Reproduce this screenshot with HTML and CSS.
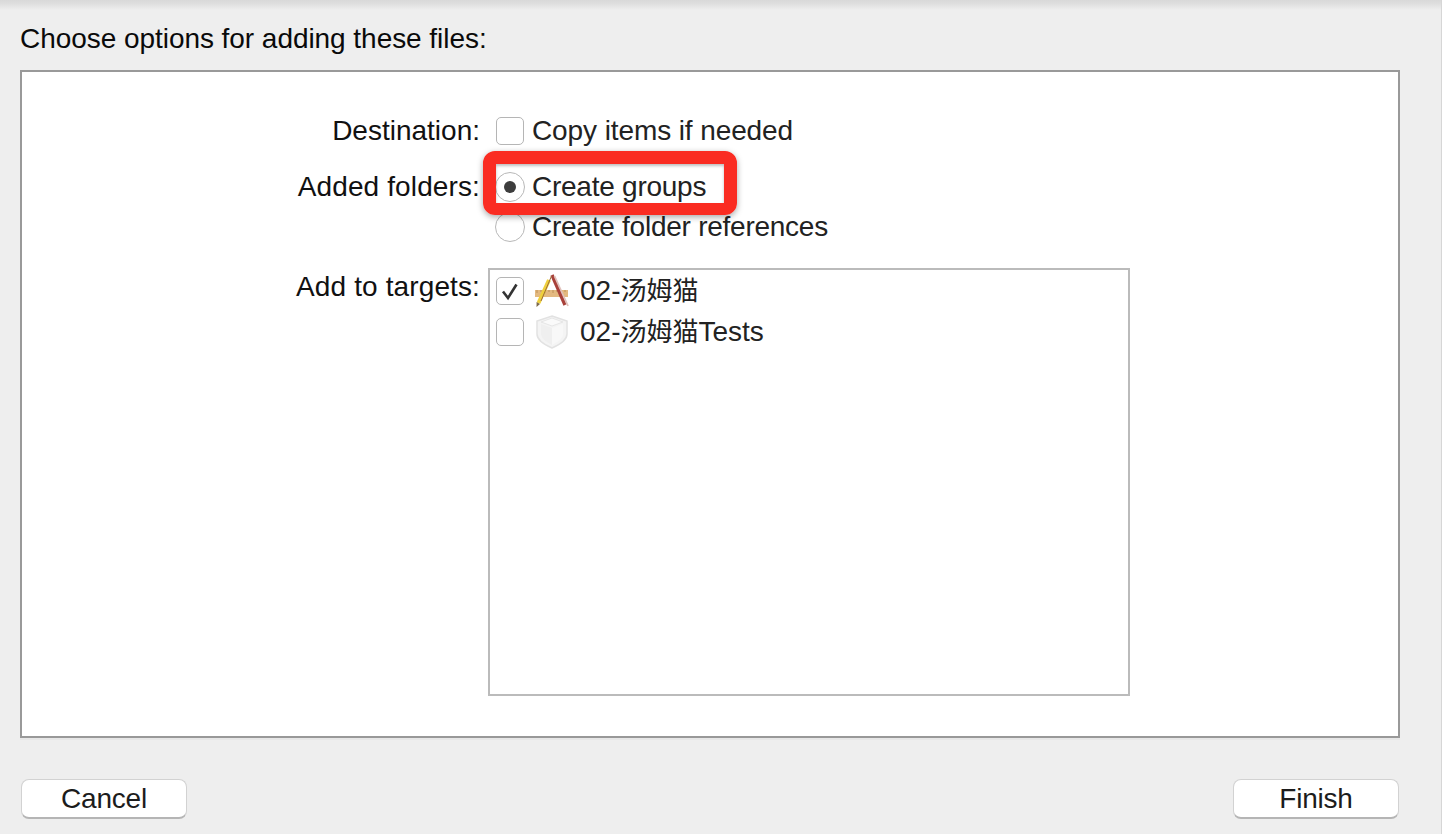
FILE: index.html
```html
<!DOCTYPE html>
<html lang="en">
<head>
<meta charset="utf-8">
<title>Choose options for adding these files</title>
<link rel="stylesheet" href="styles.css">
</head>
<body>
<div class="page">
  <div class="top-shade"></div>
  <div class="content">
    <h1 class="title">Choose options for adding these files:</h1>
    <section class="panel">
      <div class="row row-first">
        <div class="label">Destination:</div>
        <div class="option"><span class="check"></span><span>Copy items if needed</span></div>
      </div>
      <div class="row">
        <div class="label label-wide">Added folders:</div>
        <div class="option option-tight"><span class="radio radio-on"></span><span>Create groups</span></div>
      </div>
      <div class="row">
        <div class="label"></div>
        <div class="option option-tight"><span class="radio"></span><span>Create folder references</span></div>
      </div>
      <div class="row row-targets">
        <div class="label label-wide">Add to targets:</div>
        <div class="list">
          <div class="target">
            <span class="check">
              <svg class="tick" viewBox="0 0 28 28" width="28" height="28"><path d="M7 14.5 L12 21 L20.5 7.5" fill="none" stroke="#333" stroke-width="2.6"/></svg>
            </span>
            <svg class="icon" viewBox="0 0 36 36" width="36" height="36">
              <rect x="1" y="17" width="33" height="7" fill="#e3b980"/>
              <path d="M3 17v3M7 17v2M11 17v3M15 17v2M19 17v3M23 17v2M27 17v3M31 17v2" stroke="#bd9058" stroke-width="1"/>
              <path d="M18 2 L31 32" stroke="#a8403a" stroke-width="3.4"/>
              <path d="M20.5 3 L34 33" stroke="#e0c0ba" stroke-width="1.8"/>
              <path d="M15 7 L4.5 30" stroke="#efd03c" stroke-width="4"/>
              <path d="M17.5 3 L7 28" stroke="#9c6b3a" stroke-width="1"/>
              <path d="M2.6 29 L6 31 L2.5 34 Z" fill="#7d6a4a"/>
            </svg>
            <span class="target-name">02-<span class="cjk">汤姆猫</span></span>
          </div>
          <div class="target">
            <span class="check"></span>
            <svg class="icon" viewBox="0 0 36 36" width="36" height="36">
              <path d="M18 2 L33 7 V20 C33 26 25 31 18 34 C11 31 3 26 3 20 V7 Z" fill="#f4f4f4" stroke="#e2e2e2" stroke-width="1.5"/>
              <path d="M18 4 L29 8 L18 12 L7 8 Z" fill="#fafafa" stroke="#e6e6e6" stroke-width="1"/>
              <path d="M7 10 V20 C7 24 12 28 18 31 V14 Z" fill="#efefef"/>
              <path d="M29 10 V20 C29 24 24 28 18 31 V14 Z" fill="#f8f8f8"/>
            </svg>
            <span class="target-name">02-<span class="cjk">汤姆猫</span>Tests</span>
          </div>
        </div>
      </div>
      <div class="callout"></div>
    </section>
    <div class="panel-edge"></div>
    <footer class="footer">
      <button class="btn" type="button">Cancel</button>
      <button class="btn" type="button">Finish</button>
    </footer>
  </div>
</div>
</body>
</html>
```
FILE: styles.css
```css
* { box-sizing: border-box; }
html, body { margin: 0; padding: 0; }
body {
  background: #eeeeee;
  font-family: "Liberation Sans", "Noto Sans CJK SC", sans-serif;
  color: #1c1c1c;
  overflow: hidden;
}
.page {
  width: 1442px;
  height: 834px;
  border-right: 1px solid #d6d6d6;
  display: flex;
  flex-direction: column;
}
.top-shade {
  height: 10px;
  flex: none;
  background: linear-gradient(#d9d9d9 0, #dedede 35%, #eeeeee 100%);
}
.content {
  padding: 9px 0 0 20px;
  width: 1400px;
}
.title {
  margin: 0 0 11px;
  font-size: 28px;
  font-weight: 400;
  line-height: 40px;
  color: #0a0a0a;
  letter-spacing: -.05px;
}
.panel {
  position: relative;
  width: 1380px;
  height: 668px;
  background: #fff;
  border: 2px solid #999;
  padding-top: 39px;
}
.panel-edge {
  height: 2px;
  background: #e7e7e7;
}
.row {
  display: flex;
  height: 40px;
  font-size: 28px;
  line-height: 40px;
}
.row-first { margin-bottom: 16px; }
.label {
  width: 458px;
  flex: none;
  text-align: right;
  color: #111;
}
.label-wide { letter-spacing: .12px; }
.option {
  display: flex;
  align-items: center;
  margin-left: 16px;
  color: #222;
  letter-spacing: -.1px;
}
.option-tight { letter-spacing: -.25px; }
.check {
  display: block;
  flex: none;
  width: 28px;
  height: 28px;
  border: 1px solid #b5b5b5;
  border-radius: 5px;
  background: #fff;
  margin-right: 8px;
}
.tick { display: block; margin: -1px; }
.radio {
  display: block;
  flex: none;
  width: 30px;
  height: 30px;
  border: 1px solid #b8b8b8;
  border-radius: 50%;
  background: #fff;
  margin: 0 7px 0 -1px;
  position: relative;
}
.radio-on::after {
  content: "";
  position: absolute;
  left: 8px;
  top: 8px;
  width: 12px;
  height: 12px;
  border-radius: 50%;
  background: #3d3d3d;
}
.row-targets {
  height: 428px;
  margin-top: 21px;
}
.row-targets .label { line-height: 38px; }
.list {
  margin-left: 8px;
  width: 642px;
  height: 428px;
  border: 2px solid #bbb;
  padding: 1px 0 0 6px;
  background: #fff;
}
.target {
  display: flex;
  align-items: center;
  height: 40px;
  margin-bottom: 1px;
  color: #222;
}
.target .check { margin-right: 10px; }
.icon { flex: none; margin-right: 10px; }
.target-name { white-space: nowrap; }
.cjk { font-size: 26px; }
.callout {
  position: absolute;
  left: 461px;
  top: 79px;
  width: 254px;
  height: 64px;
  border: 13px solid #fa2c22;
  border-bottom-width: 12px;
  border-radius: 12px;
  box-shadow: 0 2px 6px rgba(0, 0, 0, .35), inset 0 2px 3px rgba(0, 0, 0, .25);
}
.footer {
  display: flex;
  justify-content: space-between;
  width: 1380px;
  padding: 0 1px;
  margin-top: 39px;
}
.btn {
  width: 166px;
  height: 40px;
  background: #fff;
  border: 1px solid #d2d2d2;
  border-bottom: 2px solid #b5b5b5;
  border-radius: 8px;
  font: 400 28px/36px "Liberation Sans", sans-serif;
  letter-spacing: -.2px;
  color: #1c1c1c;
  padding: 0;
}
```
